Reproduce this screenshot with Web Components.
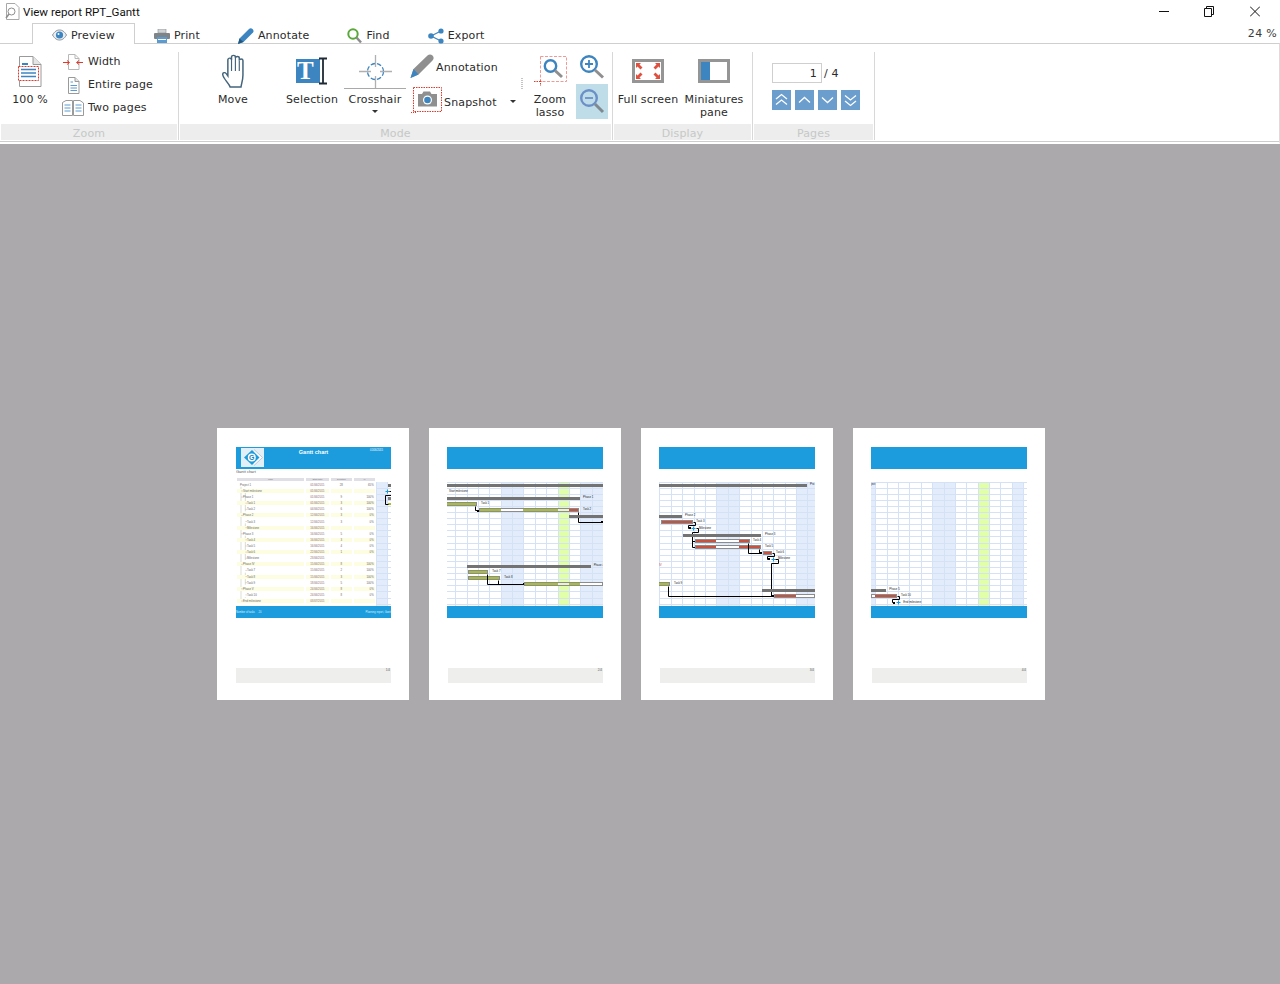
<!DOCTYPE html>
<html>
<head>
<meta charset="utf-8">
<title>View report RPT_Gantt</title>
<style>
    html, body { margin: 0; padding: 0; height: 984px; overflow: hidden; background: #fff; }
    body { display: flex; flex-direction: column; font: 11px "DejaVu Sans", Verdana, sans-serif; letter-spacing: .15px; color: #2b2b2b; }
    .stack { display: flex; flex-direction: column; }
    svg { display: block; }
</style>
</head>
<body>
<win-titlebar title="View report RPT_Gantt"></win-titlebar>

<ribbon-tabs zoom="24 %">
    <ribbon-tab active label="Preview">
        <svg width="15" height="12" viewBox="0 0 15 12"><path d="M.5 6C3 2 5 1 7.500 1S12 2 14.500 6C12 10 10 11 7.500 11S3 10 .5 6Z" fill="#e9eef2" stroke="#8a9298"/><circle cx="7.500" cy="6" r="3.600" fill="#3d85c0"/><circle cx="6.500" cy="5" r="1" fill="#fff"/></svg>
    </ribbon-tab>
    <ribbon-tab label="Print">
        <svg width="16" height="14" viewBox="0 0 16 14"><rect x="4" y="0" width="8" height="4" fill="#cfd3d6" stroke="#8d8d8d" stroke-width=".6"/><rect x="0" y="4" width="16" height="6" rx="1" fill="#7f8488"/><rect x="3" y="8" width="10" height="6" fill="#5b9bd0"/><rect x="4" y="10" width="8" height="1" fill="#fff"/></svg>
    </ribbon-tab>
    <ribbon-tab label="Annotate">
        <svg width="16" height="16" viewBox="0 0 16 16"><path d="M0 16 1.500 10.500 11 1C12 0 13.500 0 14.500 1S16 3.500 15 4.500L5.500 14Z" fill="#3d85c0"/><path d="M0 16 1.500 10.500 5.500 14Z" fill="#22577f"/></svg>
    </ribbon-tab>
    <ribbon-tab label="Find">
        <svg width="15" height="16" viewBox="0 0 15 16"><circle cx="6" cy="6" r="4.700" fill="none" stroke="#5aa83a" stroke-width="2"/><path d="M9.500 9.500 14 14.500" stroke="#8c8c8c" stroke-width="2.500"/></svg>
    </ribbon-tab>
    <ribbon-tab label="Export">
        <svg width="16" height="16" viewBox="0 0 16 16"><path d="M13 3 3 8 13 13" fill="none" stroke="#3d85c0" stroke-width="1.200"/><circle cx="13" cy="3" r="2.600" fill="#3d85c0"/><circle cx="3" cy="8" r="2.800" fill="#3d85c0"/><circle cx="13" cy="13" r="2.600" fill="#3d85c0"/></svg>
    </ribbon-tab>
</ribbon-tabs>

<ribbon-bar>
    <ribbon-group label="Zoom" size="179">
        <big-button w="58">
            <svg slot="icon" width="24" height="31" viewBox="0 0 24 31"><path d="M1.500 .5H15L23 8.500V30.500H1.500Z" fill="#fff" stroke="#9a9a9a"/><path d="M15 .5V8.500H23" fill="#e5e5e5" stroke="#9a9a9a"/><rect x="4" y="7" width="6" height="2" fill="#3d85c0"/><rect x=".5" y="10.500" width="20" height="14" fill="#fff" stroke="#e0392b" stroke-dasharray="2 1"/><path d="M3 13.500H18M3 17H18M3 20.500H18" stroke="#3d85c0" stroke-width="1.600"/></svg>
            100 %
        </big-button>
        <div class="stack" style="margin:6px 0 0 3px">
            <small-button label="Width">
                <svg slot="icon" width="22" height="18" viewBox="0 0 22 18"><path d="M6.500 1.500H13L17 5.500V16.500H6.500Z" fill="#fff" stroke="#b8b8b8"/><path d="M13 1.500V5.500H17" fill="none" stroke="#b8b8b8"/><path d="M1 9.500H7M5 7.500 7.500 9.500 5 11.500M21 9.500H15M17 7.500 14.500 9.500 17 11.500" fill="none" stroke="#e0392b"/></svg>
            </small-button>
            <small-button label="Entire page">
                <svg slot="icon" width="22" height="18" viewBox="0 0 22 18"><path d="M6.500 1.500H13L17 5.500V17.500H6.500Z" fill="#fff" stroke="#9a9a9a"/><path d="M13 1.500V5.500H17" fill="#e5e5e5" stroke="#9a9a9a"/><path d="M8.500 6H11M8.500 9.500H15M8.500 12H15M8.500 14.500H15" stroke="#5b9bd0"/></svg>
            </small-button>
            <small-button label="Two pages">
                <svg slot="icon" width="22" height="18" viewBox="0 0 22 18"><path d="M.5 3.500 4 1.500H10.500V16.500H.5ZM11.500 1.500H18L21.500 4V16.500H11.500Z" fill="#fff" stroke="#9a9a9a"/><path d="M2.500 6H8.500M2.500 9H8.500M2.500 12H8.500M13.500 6H19.500M13.500 9H19.500M13.500 12H19.500" stroke="#5b9bd0"/></svg>
            </small-button>
        </div>
    </ribbon-group>

    <ribbon-group label="Mode" size="434">
        <big-button w="60" style="margin-left:23px">
            <svg slot="icon" width="24" height="34" viewBox="0 0 21 34" preserveAspectRatio="none"><path d="M8 33C7 29 2 25 1.500 20.500C1.300 18.500 3.500 18 4.500 19.500L6 22V6C6 3.500 9.200 3.500 9.200 6V3C9.200 .8 12.600 .8 12.600 3V4C12.600 2 16 2 16 4V6.500C16 4.500 19.200 4.500 19.200 6.500V21C19.200 26 18 29 17.500 33Z" fill="#fff" stroke="#44647c" stroke-width="1.300"/><path d="M9.200 6V17M12.600 4V17M16 6.500V17" stroke="#44647c" stroke-width="1"/></svg>
            Move
        </big-button>
        <big-button w="64" style="margin-left:17px">
            <svg slot="icon" width="34" height="28" viewBox="0 0 34 28"><rect x="1" y="2" width="20" height="24" fill="#3d85c0"/><text x="10.500" y="22" text-anchor="middle" font-family="Liberation Serif" font-weight="700" font-size="25" fill="#fff">T</text><rect x="21" y="2" width="4" height="24" fill="#3d85c0"/><path d="M24 1.500H32M28 1.500V26.500M24 26.500H32" stroke="#1f2a35" stroke-width="1.800" fill="none"/></svg>
            Selection
        </big-button>
        <big-button w="62" split>
            <svg slot="icon" width="33" height="33" viewBox="0 0 33 33"><circle cx="16.500" cy="16.500" r="8" fill="none" stroke="#3d85c0" stroke-width="1.300" stroke-dasharray="4.500 2"/><path d="M16.500 0V12M16.500 21V33M0 16.500H12M21 16.500H33" stroke="#b0b0b0" stroke-width="1.300"/></svg>
            Crosshair
        </big-button>
        <div class="stack" style="width:114px;padding-top:10px;margin-left:1px">
            <small-button label="Annotation" style="height:24px;margin-left:3px;--drop:2px">
                <svg slot="icon" style="margin-right:-2px" width="24" height="24" viewBox="0 0 24 24"><path d="M.5 24 3.500 15 17.500 1.500C19 0 21 0 22.500 1.500S24 5 22.500 6.500L8.500 20.500Z" fill="#8f8f8f"/><path d="M.5 24 3.500 15 8.500 20.500Z" fill="#3d85c0"/></svg>
            </small-button>
            <small-button label="Snapshot" arrow style="height:26px;margin:9px 0 0 4px;--drop:4px">
                <svg slot="icon" style="margin-right:-2px" width="31" height="26" viewBox="0 0 31 26"><rect x="2.500" y=".5" width="28" height="24" fill="#fff" stroke="#e0392b" stroke-dasharray="1.500 1"/><path d="M0 25.500H6M2.500 23V26" stroke="#e0392b" stroke-dasharray="1 1"/><path d="M7 7H11L12.500 4.500H19L20.500 7H26V19.500H7Z" fill="#8f8f8f"/><circle cx="16.500" cy="13" r="4.500" fill="#fff"/><circle cx="16.500" cy="13" r="3.300" fill="#3d85c0"/></svg>
            </small-button>
        </div>
        <svg width="2" height="12" viewBox="0 0 2 12" style="margin-top:34px"><path d="M1 0V12" stroke="#c4c4c4" stroke-width="2" stroke-dasharray="1 1"/></svg>
        <big-button w="50" style="margin-left:2px">
            <svg slot="icon" style="margin-left:2px" width="34" height="32" viewBox="0 0 34 32"><rect x="6.500" y="1.500" width="26" height="25" fill="none" stroke="#ef9a94" stroke-dasharray="3 1.500"/><path d="M0 26.500H8M6.500 25.500V31" stroke="#e0392b" stroke-dasharray="1.500 1"/><circle cx="16.500" cy="11" r="5.700" fill="none" stroke="#3d85c0" stroke-width="2.400"/><path d="M21 15.500 28 22" stroke="#8f8f8f" stroke-width="3"/></svg>
            Zoom<br>lasso
        </big-button>
        <div class="stack" style="width:32px;padding-top:10px;margin-left:1px">
            <tool-icon>
                <svg width="32" height="26" viewBox="0 0 32 26"><circle cx="13" cy="10" r="7.800" fill="none" stroke="#3d85c0" stroke-width="2.400"/><path d="M9 10H17M13 6V14" stroke="#3d85c0" stroke-width="1.800"/><path d="M19 16 27 23.500" stroke="#8f8f8f" stroke-width="3"/></svg>
            </tool-icon>
            <tool-icon active style="margin-top:4px">
                <svg width="32" height="35" viewBox="0 0 32 35"><circle cx="13" cy="14" r="7.800" fill="none" stroke="#6d8fc8" stroke-width="2.400"/><path d="M9 14H17" stroke="#6d8fc8" stroke-width="1.800"/><path d="M19 20 27 28" stroke="#7f8a90" stroke-width="3"/></svg>
            </tool-icon>
        </div>
    </ribbon-group>

    <ribbon-group label="Display" size="140">
        <big-button w="66" style="margin-left:1px">
            <svg slot="icon" width="32" height="24" viewBox="0 0 32 24"><rect x="1.500" y="1.500" width="29" height="21" fill="#fff" stroke="#959595" stroke-width="3"/><path d="M4 4H9L7.500 5.500 10.500 8.500 8.500 10.500 5.500 7.500 4 9ZM28 4H23L24.500 5.500 21.500 8.500 23.500 10.500 26.500 7.500 28 9ZM4 20H9L7.500 18.500 10.500 15.500 8.500 13.500 5.500 16.500 4 15ZM28 20H23L24.500 18.500 21.500 15.500 23.500 13.500 26.500 16.500 28 15Z" fill="#e0503f"/></svg>
            Full screen
        </big-button>
        <big-button w="66">
            <svg slot="icon" width="32" height="24" viewBox="0 0 32 24"><rect x="1.500" y="1.500" width="29" height="21" fill="#fff" stroke="#959595" stroke-width="3"/><rect x="3" y="3" width="9" height="18" fill="#3d85c0"/></svg>
            Miniatures<br>pane
        </big-button>
    </ribbon-group>

    <ribbon-group label="Pages" size="122">
        <page-pager current="1" total="4"></page-pager>
    </ribbon-group>
</ribbon-bar>

<report-viewer>
    <report-page inset="19" number="1/4">
        <svg slot="logo" width="23" height="19" viewBox="0 0 23 19"><rect width="23" height="19" fill="#e2eff6"/><path d="M13 1.500 21.500 9.500 13 17.500" fill="#fff" stroke="#b9c8d2"/><path d="M11 2 18.500 9.500 11 17 3 9.500Z" fill="#1c9cdc"/><circle cx="10.800" cy="9.500" r="4" fill="#fff"/><text x="10.800" y="12" text-anchor="middle" font-family="Liberation Sans" font-weight="700" font-size="7" fill="#1c7fb8">G</text></svg>
        <span slot="title">Gantt chart</span>
        <span slot="date">01/06/2015</span>
        <span slot="foot-left">Number of tasks &nbsp; &nbsp; 20</span>
        <span slot="foot-right">Planning report, Gantt</span>
        <task-table></task-table>
    </report-page>
    <report-page number="2/4"><gantt-sheet sheet="2"></gantt-sheet></report-page>
    <report-page number="3/4"><gantt-sheet sheet="3"></gantt-sheet></report-page>
    <report-page number="4/4"><gantt-sheet sheet="4"></gantt-sheet></report-page>
</report-viewer>

<script>
class WinTitlebar extends HTMLElement {
    connectedCallback() {
        this.attachShadow({ mode: "open" }).innerHTML = `
        <style>
            :host { display: flex; align-items: center; height: 23px; padding-left: 5px; font: 11.600px Roboto, "Noto Sans", sans-serif; letter-spacing: 0; color: #111; flex: none; }
            .name { margin-left: 3px; }
            .controls { margin-left: auto; display: flex; margin-right: 20px; gap: 35px; }
            .controls svg { display: block; }
        </style>
        <svg width="15" height="17" viewBox="0 0 15 17"><path d="M1.500 .5H10L14 4.500V16.500H1.500Z" fill="#fff" stroke="#a8a8a8"/><circle cx="6.500" cy="8.500" r="3.500" fill="none" stroke="#8e8e8e"/><path d="M4 11 1 15" stroke="#8e8e8e" stroke-width="1.500"/></svg>
        <span class="name">${this.getAttribute("title")}</span>
        <div class="controls">
            <svg width="10" height="11" viewBox="0 0 10 11"><path d="M0 5.500H10" stroke="#111"/></svg>
            <svg width="10" height="11" viewBox="0 0 10 11"><path d="M.5 2.500H7.500V10.500H.5ZM2.500 2.500V.5H9.500V8.500H7.500" fill="none" stroke="#111"/></svg>
            <svg width="10" height="11" viewBox="0 0 10 11" style="margin-left:1px"><path d="M0 .5 10 10.500M10 .5 0 10.500" stroke="#111"/></svg>
        </div>`;
    }
}
customElements.define("win-titlebar", WinTitlebar);

class RibbonTabs extends HTMLElement {
    connectedCallback() {
        this.attachShadow({ mode: "open" }).innerHTML = `
        <style>
            :host { display: flex; height: 21px; padding-left: 32px; box-sizing: border-box; flex: none; position: relative; z-index: 1; }
            .zoom { margin: 4px 3px 0 auto; color: #3c3c3c; line-height: 13px; letter-spacing: .3px; }
        </style>
        <slot></slot>
        <span class="zoom">${this.getAttribute("zoom")}</span>`;
    }
}
customElements.define("ribbon-tabs", RibbonTabs);

class RibbonTab extends HTMLElement {
    connectedCallback() {
        this.attachShadow({ mode: "open" }).innerHTML = `
        <style>
            :host { display: flex; align-items: center; gap: 4px; padding: 3px 19px 0; box-sizing: border-box; height: 21px; border-top: 1px solid transparent; }
            :host([active]) { background: #fff; border: 1px solid #cfcfcf; border-bottom: 0; padding: 2px 19px 0; }
        </style>
        <slot></slot><span>${this.getAttribute("label")}</span>`;
    }
}
customElements.define("ribbon-tab", RibbonTab);

class RibbonBar extends HTMLElement {
    connectedCallback() {
        this.attachShadow({ mode: "open" }).innerHTML = `
        <style>
            :host { display: flex; height: 101px; padding-left: 1px; box-sizing: border-box; flex: none; border-top: 1px solid #cfcfcf; border-bottom: 2px solid #fff; margin-top: -1px; background: #fff; border-right: 1px solid #dcdcdc; box-shadow: inset 0 -1px 0 #cdcdcd; }
        </style>
        <slot></slot>`;
    }
}
customElements.define("ribbon-bar", RibbonBar);

class RibbonGroup extends HTMLElement {
    connectedCallback() {
        this.attachShadow({ mode: "open" }).innerHTML = `
        <style>
            :host { display: flex; height: 96px; width: ${this.getAttribute("size")}px; flex: none; }
            .main { flex: 1; display: flex; flex-direction: column; min-width: 0; }
            .content { height: 80px; display: flex; align-items: flex-start; }
            .label { height: 16px; line-height: 19px; background: #ecedec; color: #c6c8c8; text-align: center; }
            .sep { width: 1px; margin: 8px 1px 0; background: #d8d8d8; }
        </style>
        <div class="main">
            <div class="content"><slot></slot></div>
            <div class="label">${this.getAttribute("label")}</div>
        </div>
        <div class="sep"></div>`;
    }
}
customElements.define("ribbon-group", RibbonGroup);

class BigButton extends HTMLElement {
    connectedCallback() {
        const w = this.getAttribute("w");
        this.attachShadow({ mode: "open" }).innerHTML = `
        <style>
            :host { display: flex; flex-direction: column; align-items: center; width: ${w}px; flex: none; padding-top: 7px; box-sizing: border-box; line-height: 13px; text-align: center; }
            .icon { height: 40px; width: 100%; margin-bottom: 2px; display: flex; align-items: center; justify-content: center; box-sizing: border-box; }
            :host([split]) .icon { height: 38px; padding-top: 3px; border-bottom: 1px solid #a9a9a9; margin-bottom: 4px; }
            .arrow { display: none; width: 0; height: 0; margin-top: 4px; border: 3px solid transparent; border-top: 3px solid #333; border-bottom: 0; }
            :host([split]) .arrow { display: block; }
        </style>
        <div class="icon"><slot name="icon"></slot></div>
        <div><slot></slot></div>
        <div class="arrow"></div>`;
    }
}
customElements.define("big-button", BigButton);

class SmallButton extends HTMLElement {
    connectedCallback() {
        this.attachShadow({ mode: "open" }).innerHTML = `
        <style>
            :host { display: flex; align-items: center; gap: 4px; height: 23px; }
            span { margin-top: var(--drop, 0); }
            .arrow { display: none; width: 0; height: 0; margin: 2px 0 0 9px; border: 3px solid transparent; border-top: 3px solid #333; border-bottom: 0; }
            :host([arrow]) .arrow { display: block; }
        </style>
        <slot name="icon"></slot>
        <span>${this.getAttribute("label")}</span>
        <div class="arrow"></div>`;
    }
}
customElements.define("small-button", SmallButton);

class ToolIcon extends HTMLElement {
    connectedCallback() {
        this.attachShadow({ mode: "open" }).innerHTML = `
        <style>
            :host { display: block; }
            :host([active]) { background: #bfdde9; }
        </style>
        <slot></slot>`;
    }
}
customElements.define("tool-icon", ToolIcon);

class PagePager extends HTMLElement {
    connectedCallback() {
        const chevrons = [
            "M4 9 9.500 4.500 15 9M4 14.500 9.500 10 15 14.500",
            "M4 12.500 9.500 7.500 15 12.500",
            "M4 7.500 9.500 12.500 15 7.500",
            "M4 5.500 9.500 10 15 5.500M4 11 9.500 15.500 15 11"
        ];
        this.attachShadow({ mode: "open" }).innerHTML = `
        <style>
            :host { display: flex; flex-direction: column; padding: 19px 0 0 18px; }
            .count { display: flex; align-items: center; height: 20px; gap: 2px; }
            .box { width: 50px; height: 20px; box-sizing: border-box; border: 1px solid #cfcfcf; text-align: right; padding-right: 4px; line-height: 19px; }
            .of { padding-top: 1px; }
            .buttons { display: flex; gap: 4px; margin-top: 7px; }
            .buttons svg { display: block; background: #6b9dcd; }
        </style>
        <div class="count"><span class="box">${this.getAttribute("current")}</span><span class="of">/ ${this.getAttribute("total")}</span></div>
        <div class="buttons">
            ${chevrons.map(d => `<svg width="19" height="20" viewBox="0 0 19 20"><path d="${d}" fill="none" stroke="#fff" stroke-width="1.300"/></svg>`).join("")}
        </div>`;
    }
}
customElements.define("page-pager", PagePager);

class ReportViewer extends HTMLElement {
    connectedCallback() {
        this.attachShadow({ mode: "open" }).innerHTML = `
        <style>
            :host { display: flex; flex: 1; align-items: center; justify-content: center; gap: 20px; padding-right: 18px; background: #aba9ab; }
        </style>
        <slot></slot>`;
    }
}
customElements.define("report-viewer", ReportViewer);

class ReportPage extends HTMLElement {
    connectedCallback() {
        const inset = this.getAttribute("inset") || 18;
        this.attachShadow({ mode: "open" }).innerHTML = `
        <style>
            :host { display: flex; flex-direction: column; width: 192px; height: 272px; box-sizing: border-box; padding: 19px 18px 0 ${inset}px; background: #fff; flex: none; font-family: "Liberation Sans", sans-serif; letter-spacing: 0; }
            .head { height: 22px; background: #1c9cdc; color: #fff; display: flex; position: relative; padding: 1px 0 0 5px; box-sizing: border-box; }
            .title { position: absolute; left: 0; right: 0; top: 2px; text-align: center; font-size: 5.500px; line-height: 6px; font-weight: 700; }
            .date { position: absolute; right: 8px; top: 1.500px; font-size: 2.600px; line-height: 4px; }
            .sheet { height: 137px; display: flex; flex-direction: column; justify-content: flex-end; }
            .foot { height: 12px; background: #1c9cdc; color: #dff2fb; display: flex; justify-content: space-between; align-items: center; font-size: 2.600px; }
            .band { margin: 50px 0 0 ${19 - inset}px; height: 15px; background: #eeeeec; text-align: right; font-size: 3px; line-height: 4px; color: #555; padding-right: 1px; }
        </style>
        <div class="head">
            <slot name="logo"></slot>
            <div class="title"><slot name="title"></slot></div>
            <div class="date"><slot name="date"></slot></div>
        </div>
        <div class="sheet"><slot></slot></div>
        <div class="foot"><slot name="foot-left"></slot><slot name="foot-right"></slot></div>
        <div class="band">${this.getAttribute("number")}</div>`;
    }
}
customElements.define("report-page", ReportPage);

// drawing helpers for the miniatures, coordinates are 3x page pixels
// snap() keeps everything on whole screen pixels so lines stay sharp
const GRID = "#d5e1f5", WEEKEND = "#e3ecfb", PALE = "#e0ffa8", OLIVE = "#a9bd35", RED = "#c9523f", STEEL = "#737373";
const snap = v => 3 * Math.round(v / 3);

function rowLines(x1, x2) {
    let out = "";
    for (let i = 0; i < 20; i++) {
        const y = snap(186 + i * 18.35 - 1.5);
        out += `<rect x="${x1}" y="${y}" width="${x2 - x1}" height="3" fill="${GRID}"/>`;
    }
    return out;
}
function summary(x1, x2, y) {
    return `<rect x="${snap(x1)}" y="${snap(y)}" width="${snap(x2) - snap(x1)}" height="9" fill="${STEEL}"/>`;
}
function task(x1, x2, y, segs) {
    const l = snap(x1), r = snap(x2), t = snap(y);
    let out = `<rect x="${l}" y="${t}" width="${r - l}" height="12" fill="#8c8c8c"/><rect x="${l + 3}" y="${t + 3}" width="${r - l - 6}" height="6" fill="#fff"/>`;
    for (const [a, b, c] of segs) out += `<rect x="${snap(a)}" y="${t + 3}" width="${snap(b) - snap(a)}" height="6" fill="${c}"/>`;
    return out;
}
function link(points) {
    const pts = points.split(" ").map(p => p.split(",").map(v => snap(+v - 1.5) + 1.5).join(",")).join(" ");
    return `<polyline points="${pts}" fill="none" stroke="#000" stroke-width="3"/>`;
}
function tip(x, y) {
    return `<rect x="${snap(x - 3)}" y="${snap(y - 3)}" width="6" height="6" fill="#000"/>`;
}
function plus(x, y) {
    const cx = snap(x - 1.5) + 1.5, cy = snap(y - 1.5) + 1.5;
    return `<path d="M${cx - 6} ${cy}H${cx + 6}M${cx} ${cy - 6}V${cy + 6}" stroke="#1c9cdc" stroke-width="3"/>`;
}
function note(x, y, text) {
    return `<text x="${x}" y="${y}" font-size="8.500" fill="#222">${text}</text>`;
}

const SHEETS = {
    2: {
        cols: [85, 120, 153, 187, 222, 257, 290, 325, 358, 393, 428, 460, 497],
        weekends: [[222, 290], [460, 528]],
        holiday: [393, 428],
        items: summary(60, 528, 174)
            + note(66, 198, "Start milestone")
            + summary(60, 458, 212) + note(468, 216, "Phase 1")
            + task(60, 150, 228, [[60, 147, OLIVE]]) + note(162, 234, "Task 1")
            + link("145,240 145,254 155,254") + tip(152, 254)
            + task(156, 456, 247, [[159, 222, OLIVE], [288, 393, OLIVE], [393, 426, "#eaf5c8"], [426, 453, RED]]) + note(468, 252, "Task 2")
            + link("454,258 454,289 528,289") + tip(526, 289)
            + summary(426, 528, 266)
            + summary(120, 492, 417) + note(500, 420, "Phase 4")
            + task(123, 183, 432, [[126, 180, OLIVE]]) + note(196, 438, "Task 7")
            + task(123, 218, 450, [[126, 216, OLIVE]]) + note(232, 456, "Task 8")
            + link("181,444 181,476 290,476") + link("214,462 214,476") + tip(290, 474)
            + task(292, 528, 468, [[294, 393, OLIVE], [393, 426, "#eaf5c8"], [426, 460, OLIVE]])
    },
    3: {
        cols: [62, 97, 130, 166, 200, 232, 268, 302, 337, 370, 404, 440, 472, 505],
        weekends: [[232, 302], [472, 528]],
        holiday: null,
        items: summary(60, 504, 174) + note(513, 177, "Pro")
            + summary(60, 128, 266) + note(138, 270, "Phase 2")
            + task(66, 162, 283, [[69, 159, RED]]) + note(172, 288, "Task 3")
            + link("162,290 170,290 170,298 148,298 148,307 155,307") + tip(152, 307)
            + plus(164, 307) + note(180, 309, "Milestone")
            + link("171,307 178,307 178,319 160,319 160,363 168,363") + link("160,345 168,345")
            + summary(132, 366, 323) + note(378, 326, "Phase 3")
            + task(168, 332, 339, [[171, 231, RED], [300, 330, RED]]) + note(342, 345, "Task 4")
            + task(168, 366, 357, [[171, 231, RED], [300, 363, RED]]) + note(378, 363, "Task 5")
            + link("328,351 328,382 368,382") + link("362,369 362,382") + tip(367, 382)
            + task(372, 399, 375, [[375, 396, RED]]) + note(411, 381, "Task 6")
            + link("399,381 406,381 406,390 385,390 385,400 392,400") + tip(390, 400)
            + plus(403, 400) + note(417, 399, "Milestone")
            + link("410,400 418,400 418,412 397,412 397,511 405,511")
            + `<text x="60" y="419" font-size="8.500" fill="#c9523f">IV</text>`
            + task(60, 93, 468, [[60, 90, OLIVE]]) + note(105, 473, "Task 9")
            + link("88,480 88,511 405,511") + tip(403, 511)
            + summary(368, 528, 488)
            + task(405, 528, 505, [[408, 471, RED]])
    },
    4: {
        cols: [73, 108, 142, 175, 211, 245, 280, 314, 347, 382, 416, 449, 484, 516],
        weekends: [[60, 73], [245, 314], [484, 516]],
        holiday: [382, 416],
        items: note(60, 177, "ject")
            + summary(60, 105, 488) + note(115, 492, "Phase 5")
            + task(60, 138, 505, [[72, 135, RED]]) + note(150, 510, "Task 10")
            + link("138,512 146,512 146,520 124,520 124,530 131,530") + tip(128, 530)
            + plus(142, 529) + note(157, 530, "End milestone")
    }
};

class GanttSheet extends HTMLElement {
    connectedCallback() {
        const s = SHEETS[this.getAttribute("sheet")];
        let body = "";
        for (const [a, b] of s.weekends) body += `<rect x="${snap(a)}" y="168" width="${snap(b) - snap(a)}" height="372" fill="${WEEKEND}"/>`;
        if (s.holiday) body += `<rect x="${snap(s.holiday[0])}" y="168" width="${snap(s.holiday[1]) - snap(s.holiday[0])}" height="372" fill="${PALE}"/>`;
        body += rowLines(60, 528);
        for (const x of s.cols) body += `<rect x="${snap(x - 1.5)}" y="168" width="3" height="372" fill="${GRID}"/>`;
        body += `<rect x="60" y="168" width="468" height="3" fill="${GRID}"/>`;
        this.attachShadow({ mode: "open" }).innerHTML = `
        <style>:host { display: block; } svg { display: block; font-family: "Liberation Sans", sans-serif; }</style>
        <svg width="156" height="124" viewBox="60 168 468 372">${body}${s.items}</svg>`;
    }
}
customElements.define("gantt-sheet", GanttSheet);

const TASK_ROWS = [
    ["Project 1", 0, "01/06/2015", "28", "65%"],
    ["Start milestone", 1, "01/06/2015", "", ""],
    ["Phase 1", 1, "01/06/2015", "9", "100%"],
    ["Task 1", 2, "01/06/2015", "3", "100%"],
    ["Task 2", 2, "04/06/2015", "6", "100%"],
    ["Phase 2", 1, "12/06/2015", "3", "0%"],
    ["Task 3", 2, "12/06/2015", "3", "0%"],
    ["Milestone", 2, "16/06/2015", "", ""],
    ["Phase 3", 1, "16/06/2015", "5", "0%"],
    ["Task 4", 2, "16/06/2015", "3", "0%"],
    ["Task 5", 2, "16/06/2015", "4", "0%"],
    ["Task 6", 2, "22/06/2015", "1", "0%"],
    ["Milestone", 2, "23/06/2015", "", ""],
    ["Phase IV", 1, "15/06/2015", "8", "100%"],
    ["Task 7", 2, "15/06/2015", "2", "100%"],
    ["Task 8", 2, "15/06/2015", "3", "100%"],
    ["Task 9", 2, "18/06/2015", "5", "100%"],
    ["Phase V", 1, "24/06/2015", "8", "0%"],
    ["Task 10", 2, "24/06/2015", "8", "0%"],
    ["End milestone", 1, "03/07/2015", "", ""]
];

class TaskTable extends HTMLElement {
    connectedCallback() {
        const cols = [[66, 267], [273, 342], [348, 411], [417, 480]];
        const heads = ["Task", "Start date", "Duration", "%"];
        let body = `<text x="63" y="140" font-size="12" fill="#555">Gantt chart</text>`;
        cols.forEach(([a, b], i) => {
            body += `<rect x="${a}" y="156" width="${b - a}" height="9" fill="#dfdfe5"/>`;
            body += `<text x="${(a + b) / 2}" y="163" font-size="7" text-anchor="middle" fill="#777">${heads[i]}</text>`;
        });
        // gantt sliver on the right of the table
        body += `<rect x="484" y="168" width="34" height="372" fill="${WEEKEND}"/>` + rowLines(484, 528);
        body += `<rect x="483" y="168" width="3" height="372" fill="${GRID}"/><rect x="516" y="168" width="3" height="372" fill="${GRID}"/>`;
        body += summary(520, 528, 174);
        body += plus(517, 196) + link("522,196 528,196");
        body += `<rect x="519" y="213" width="9" height="9" fill="#808080"/><rect x="519" y="231" width="9" height="6" fill="${OLIVE}"/>`;
        body += link("528,209 512,209 512,235 519,235");
        body += `<path d="M78 182V522M91 200V256M91 292V310M91 329V402M91 440V476M91 514V516" stroke="#b8b8a8" stroke-width="1.500" fill="none"/>`;
        TASK_ROWS.forEach(([name, level, start, dur, pct], i) => {
            const y = 176.500 + i * 18.35;
            if (i % 2) cols.forEach(([a, b]) => { body += `<rect x="${a}" y="${snap(y - 6)}" width="${b - a}" height="12" fill="#fdfde2"/>`; });
            const x = level === 0 ? 75 : level === 1 ? 84 : 96;
            if (level) body += `<path d="M${level === 1 ? 78 : 91} ${y}H${x}" stroke="#b8b8a8" stroke-width="1.500"/>`;
            body += `<text x="${x}" y="${y + 3}" font-size="8.500" fill="#666">${name}</text>`;
            body += `<text x="307" y="${y + 3}" font-size="8.500" text-anchor="middle" fill="#8a6a74">${start}</text>`;
            body += `<text x="379" y="${y + 3}" font-size="8.500" text-anchor="middle" fill="#666">${dur}</text>`;
            body += `<text x="476" y="${y + 3}" font-size="8.500" text-anchor="end" fill="#666">${pct}</text>`;
        });
        this.attachShadow({ mode: "open" }).innerHTML = `
        <style>:host { display: block; } svg { display: block; font-family: "Liberation Sans", sans-serif; }</style>
        <svg width="155" height="137" viewBox="63 129 465 411">${body}</svg>`;
    }
}
customElements.define("task-table", TaskTable);
</script>
</body>
</html>
